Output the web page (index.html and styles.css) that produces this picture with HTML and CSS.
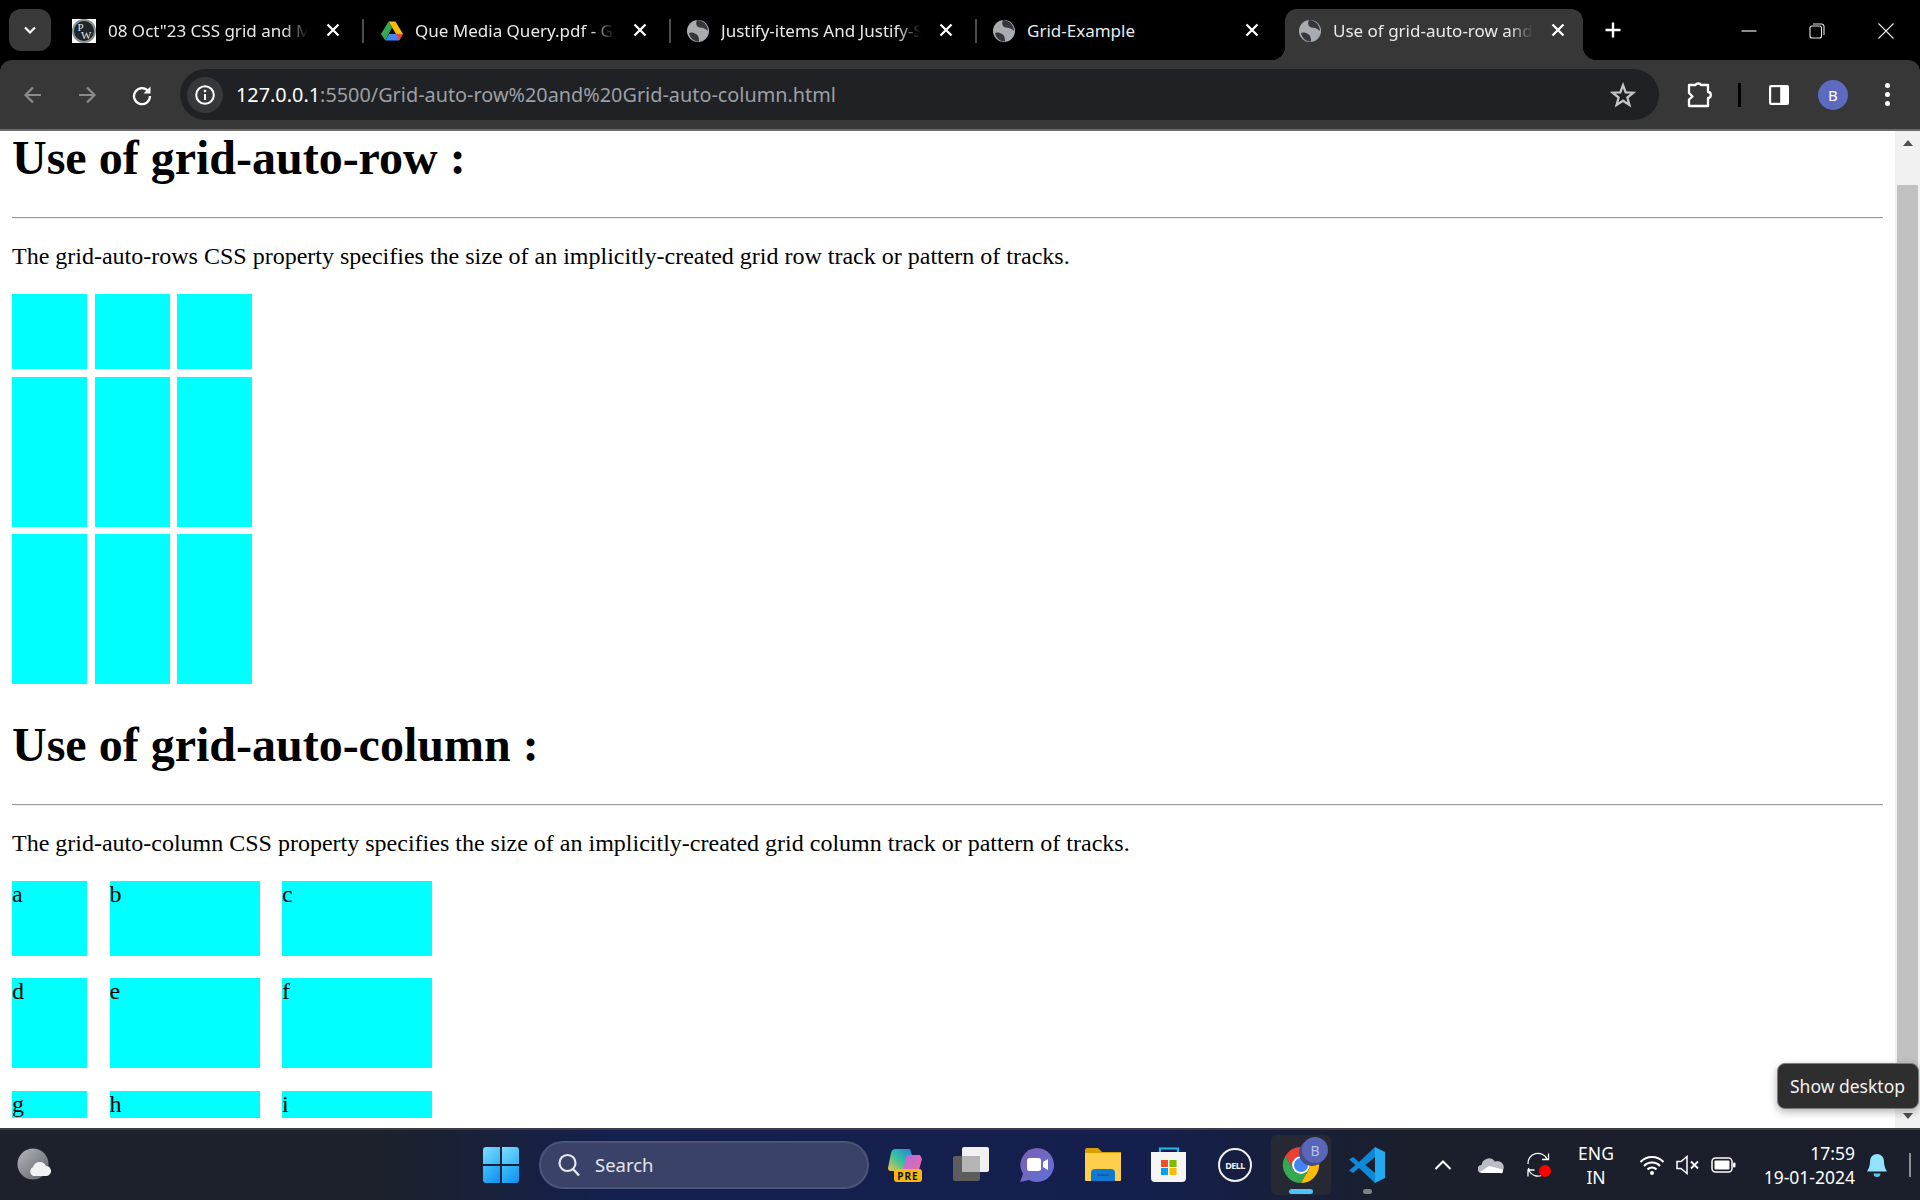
FILE: index.html
```html
<!DOCTYPE html>
<html lang="en">
<head>
<meta charset="utf-8">
<title>Use of grid-auto-row and Grid-auto-column</title>
<link rel="stylesheet" href="styles.css">
</head>
<body>
<div class="screen">
  <header class="chrome">
    <div class="tabstrip">
      <button class="tab-search"><svg width="16" height="16" viewBox="0 0 16 16"><path d="M3 5.500 8 10.500 13 5.500" fill="none" stroke="#fff" stroke-width="2.200"/></svg></button>
      <div class="tab">
        <svg class="fav fav-first" viewBox="0 0 24 24"><rect width="24" height="24" fill="#fff"/><circle cx="12" cy="12" r="12" fill="#8c9193"/><circle cx="12" cy="12" r="10" fill="#1d262a"/><text x="5.500" y="12" class="fav-p">P</text><text x="9" y="20" class="fav-p">W</text></svg>
        <span class="title fade">08 Oct"23 CSS grid and M</span>
        <svg class="close" viewBox="0 0 20 20"><path d="M4.500 4.500 15.500 15.500M15.500 4.500 4.500 15.500" stroke="#fff" stroke-width="2.300"/></svg>
        <i class="sep"></i>
      </div>
      <div class="tab">
        <svg class="fav" viewBox="0 0 24 24"><path d="M8.500 2.500h7L23 15h-7z" fill="#fbbc04"/><path d="M9 15h14l-4 6.500H5.300z" fill="#4285f4"/><path d="M16 15h7l-4 6.500z" fill="#ea4335"/><path d="M8.500 2.500 12 8.600 5.300 21.500 1 15z" fill="#34a853"/></svg>
        <span class="title fade">Que Media Query.pdf - G</span>
        <svg class="close" viewBox="0 0 20 20"><path d="M4.500 4.500 15.500 15.500M15.500 4.500 4.500 15.500" stroke="#fff" stroke-width="2.300"/></svg>
        <i class="sep"></i>
      </div>
      <div class="tab">
        <svg class="fav" viewBox="0 0 24 24"><use href="#globe"/></svg>
        <span class="title fade">Justify-items And Justify-S</span>
        <svg class="close" viewBox="0 0 20 20"><path d="M4.500 4.500 15.500 15.500M15.500 4.500 4.500 15.500" stroke="#fff" stroke-width="2.300"/></svg>
        <i class="sep"></i>
      </div>
      <div class="tab">
        <svg class="fav" viewBox="0 0 24 24"><use href="#globe"/></svg>
        <span class="title">Grid-Example</span>
        <svg class="close" viewBox="0 0 20 20"><path d="M4.500 4.500 15.500 15.500M15.500 4.500 4.500 15.500" stroke="#fff" stroke-width="2.300"/></svg>
      </div>
      <div class="tab tab-active">
        <svg class="fav" viewBox="0 0 24 24"><use href="#globe"/></svg>
        <span class="title fade">Use of grid-auto-row and</span>
        <svg class="close" viewBox="0 0 20 20"><path d="M4.500 4.500 15.500 15.500M15.500 4.500 4.500 15.500" stroke="#fff" stroke-width="2.300"/></svg>
      </div>
      <button class="new-tab"><svg width="18" height="18" viewBox="0 0 18 18"><path d="M9 1.500v15M1.500 9h15" stroke="#fff" stroke-width="2.400"/></svg></button>
      <div class="win-controls">
        <span class="win"><svg width="16" height="16" viewBox="0 0 16 16"><path d="M.5 8h15" stroke="#e8e8e8" stroke-width="1.200"/></svg></span>
        <span class="win"><svg width="16" height="16" viewBox="0 0 16 16"><rect x="1" y="3" width="11.500" height="12" rx="2" fill="none" stroke="#e8e8e8" stroke-width="1.100"/><path d="M4 1h8.500A2.500 2.500 0 0 1 15 3.500V12" fill="none" stroke="#e8e8e8" stroke-width="1.100"/></svg></span>
        <span class="win"><svg width="16" height="16" viewBox="0 0 16 16"><path d="M.5.500 15.500 15.500M15.500.500.5 15.500" stroke="#e8e8e8" stroke-width="1.100"/></svg></span>
      </div>
    </div>
    <div class="toolbar">
      <span class="tool tool-back"><svg width="22" height="22" viewBox="0 0 22 22"><path d="M19 11H4M11 3.500 3.500 11l7.500 7.500" fill="none" stroke="#8a8b8d" stroke-width="2.200"/></svg></span>
      <span class="tool tool-fwd"><svg width="22" height="22" viewBox="0 0 22 22"><path d="M3 11h15M11 3.500 18.500 11 11 18.500" fill="none" stroke="#8a8b8d" stroke-width="2.200"/></svg></span>
      <span class="tool tool-reload"><svg width="22" height="22" viewBox="0 0 22 22"><path d="M17.500 7.500A8 8 0 1 0 19 12" fill="none" stroke="#fff" stroke-width="2.300"/><path d="M19.500 2.500v7h-7z" fill="#fff"/></svg></span>
      <div class="omnibox">
        <span class="info"><svg width="22" height="22" viewBox="0 0 22 22"><circle cx="11" cy="11" r="8.800" fill="none" stroke="#fff" stroke-width="2"/><path d="M11 10v6" stroke="#fff" stroke-width="2"/><circle cx="11" cy="7" r="1.300" fill="#fff"/></svg></span>
        <span class="url"><b>127.0.0.1</b>:5500/Grid-auto-row%20and%20Grid-auto-column.html</span>
        <svg class="star" width="26" height="26" viewBox="0 0 26 26"><path d="M13 3.200 15.700 10.300 23.300 10.700 17.400 15.500 19.400 22.900 13 18.700 6.600 22.900 8.600 15.500 2.700 10.700 10.300 10.300z" fill="none" stroke="#c4c5c7" stroke-width="2.300"/></svg>
      </div>
      <span class="tool tool-ext"><svg width="26" height="26" viewBox="0 0 26 26"><path d="M3 3h6.500a3 2.500 0 0 1 5.500 0h7v7a2.800 3 0 0 1 0 6v8H3v-6.500l3.500-3L3 11z" fill="none" stroke="#fff" stroke-width="2.300" stroke-linejoin="round"/></svg></span>
      <i class="tool-sep"></i>
      <span class="tool tool-side"><svg width="22" height="22" viewBox="0 0 22 22"><rect x="1" y="1" width="20" height="20" rx="2" fill="#fff"/><rect x="3.200" y="3.200" width="9" height="15.600" fill="#373737"/></svg></span>
      <span class="avatar">B</span>
      <span class="tool tool-menu"><i></i><i></i><i></i></span>
    </div>
  </header>

  <div class="viewport">
    <main class="page">
      <h1 class="heading">Use of grid-auto-row :</h1>
      <hr class="rule">
      <p class="lead">The grid-auto-rows CSS property specifies the size of an implicitly-created grid row track or pattern of tracks.</p>
      <div class="grid-rows">
        <div class="cell"></div><div class="cell"></div><div class="cell"></div>
        <div class="cell"></div><div class="cell"></div><div class="cell"></div>
        <div class="cell"></div><div class="cell"></div><div class="cell"></div>
      </div>
      <h1 class="heading heading-two">Use of grid-auto-column :</h1>
      <hr class="rule">
      <p class="lead">The grid-auto-column CSS property specifies the size of an implicitly-created grid column track or pattern of tracks.</p>
      <div class="grid-cols">
        <div class="cell">a</div><div class="cell">b</div><div class="cell">c</div>
        <div class="cell">d</div><div class="cell">e</div><div class="cell">f</div>
        <div class="cell">g</div><div class="cell">h</div><div class="cell">i</div>
      </div>
    </main>
    <aside class="scrollbar">
      <i class="arrow-up"></i>
      <div class="thumb"></div>
      <i class="arrow-down"></i>
    </aside>
  </div>

  <footer class="taskbar">
    <span class="weather"><svg width="34" height="34" viewBox="0 0 34 34"><defs><linearGradient id="moon" x1="0" y1="0" x2="1" y2="1"><stop offset="0" stop-color="#b4b8bd"/><stop offset="1" stop-color="#5d6167"/></linearGradient></defs><circle cx="16" cy="16" r="15.500" fill="url(#moon)"/><path d="M16 28a5 5 0 0 1 0-9 7 7 0 0 1 13-1 5 5 0 0 1 3 9 3 3 0 0 1-3 1z" fill="#f1f1f1"/></svg></span>
    <span class="start"><svg width="36" height="36" viewBox="0 0 36 36"><defs><linearGradient id="wtop" x1="0" y1="0" x2="1" y2="1"><stop offset="0" stop-color="#7fdcff"/><stop offset="1" stop-color="#33b5f5"/></linearGradient><linearGradient id="wbot" x1="0" y1="0" x2="1" y2="1"><stop offset="0" stop-color="#3fc1f8"/><stop offset="1" stop-color="#0f8ff0"/></linearGradient></defs><path d="M3 0h14v17H0V3a3 3 0 0 1 3-3z" fill="url(#wtop)"/><path d="M19 0h14a3 3 0 0 1 3 3v14H19z" fill="url(#wtop)"/><path d="M0 19h17v17H3a3 3 0 0 1-3-3z" fill="url(#wbot)"/><path d="M19 19h17v14a3 3 0 0 1-3 3H19z" fill="url(#wbot)"/></svg></span>
    <div class="search">
      <svg width="24" height="24" viewBox="0 0 24 24"><circle cx="10.500" cy="10" r="8" fill="none" stroke="#e8e9ee" stroke-width="2.200"/><path d="M16 16l6 6.500" stroke="#e8e9ee" stroke-width="2.400"/></svg>
      <span class="search-label">Search</span>
    </div>
    <div class="apps">
      <span class="app"><svg width="36" height="36" viewBox="0 0 36 36"><defs><linearGradient id="cop1" x1="0" y1="1" x2="1" y2="0"><stop offset="0" stop-color="#f5c542"/><stop offset=".5" stop-color="#35c0a0"/><stop offset="1" stop-color="#2a7fe0"/></linearGradient><linearGradient id="cop2" x1="0" y1="0" x2="1" y2="1"><stop offset="0" stop-color="#b36be0"/><stop offset="1" stop-color="#ee6ca0"/></linearGradient></defs><path d="M9 2h14l2 6-8 16H4a3 3 0 0 1-3-3l3-15a5 5 0 0 1 5-4z" fill="url(#cop1)"/><path d="M20 8h13l2 4-3 11a4 4 0 0 1-4 3H15z" fill="url(#cop2)"/><rect x="7" y="22" width="28" height="13" rx="3" fill="#f7b90f"/><text x="21" y="32.500" class="pre">PRE</text></svg></span>
      <span class="app"><svg width="36" height="36" viewBox="0 0 36 36"><rect y="9" width="27" height="25" rx="2" fill="#5d5d5d"/><rect x="9" y="0" width="27" height="25" rx="2" fill="#f1f1f1"/><rect x="9" y="9" width="18" height="16" fill="#b5b5b5"/></svg></span>
      <span class="app"><svg width="36" height="36" viewBox="0 0 36 36"><defs><linearGradient id="meet" x1="0" y1="0" x2="1" y2="1"><stop offset="0" stop-color="#7d5fb0"/><stop offset="1" stop-color="#5f72d8"/></linearGradient></defs><path d="M18 1a17 17 0 1 1-8 32L1 35l3-8A17 17 0 0 1 18 1z" fill="url(#meet)"/><rect x="8" y="11" width="14" height="13" rx="2.500" fill="#fff"/><path d="M24 15l5-3v11l-5-3z" fill="#fff"/></svg></span>
      <span class="app"><svg width="36" height="36" viewBox="0 0 36 36"><path d="M0 3a2 2 0 0 1 2-2h11l4 4h19v8H0z" fill="#d9a000"/><path d="M0 6h36v27a1 1 0 0 1-1 1H1a1 1 0 0 1-1-1z" fill="#fdcf4d"/><path d="M6 34v-8a4 4 0 0 1 4-4h16a4 4 0 0 1 4 4v8z" fill="#1079d1"/><path d="M12 28h12" stroke="#0b5aa0" stroke-width="1.500"/></svg></span>
      <span class="app"><svg width="36" height="36" viewBox="0 0 36 36"><path d="M9 7V1.500h18V7" fill="none" stroke="#29b6f0" stroke-width="2.200"/><path d="M0 5h35v26a4 4 0 0 1-4 4H4a4 4 0 0 1-4-4z" fill="#f5f5f5"/><rect x="10" y="13" width="7" height="7" fill="#f25022"/><rect x="18.500" y="13" width="7" height="7" fill="#7fba00"/><rect x="10" y="21" width="7" height="7" fill="#00a4ef"/><rect x="18.500" y="21" width="7" height="7" fill="#ffb900"/></svg></span>
      <span class="app"><span class="dell">DELL</span></span>
      <span class="app">
        <span class="app-active">
          <svg width="38" height="38" viewBox="0 0 38 38"><path d="M34.600 10A18 18 0 0 0 3.400 10L11.200 23.500A9 9 0 0 1 19 10z" fill="#e94235"/><path d="M3.400 10A18 18 0 0 0 19 37L26.800 23.500A9 9 0 0 1 11.200 23.500z" fill="#34a853"/><path d="M19 37A18 18 0 0 0 34.600 10H19A9 9 0 0 1 26.800 23.500z" fill="#fbbc05"/><circle cx="19" cy="19" r="9" fill="#fff"/><circle cx="19" cy="19" r="7" fill="#4285f4"/></svg>
          <span class="app-badge">B</span>
          <i class="run run-on"></i>
        </span>
      </span>
      <span class="app"><svg width="36" height="36" viewBox="0 0 36 36"><path d="M26 0 10 15 4 10 0 12.500 6.500 18 0 23.500 4 26 10 21 26 36V26L16.500 18 26 10z" fill="#0f88d8"/><path d="M26 0 36 5V31L26 36z" fill="#23a9f2"/></svg><i class="run run-off"></i></span>
    </div>
    <div class="tray">
      <span class="tray-cell"><svg width="18" height="12" viewBox="0 0 18 12"><path d="M1.500 10 9 2.500 16.500 10" fill="none" stroke="#fff" stroke-width="2"/></svg></span>
      <span class="tray-cell"><svg width="26" height="18" viewBox="0 0 26 18"><path d="M4 17a4 4 0 0 1-.5-8A7.500 7.500 0 0 1 17 5.500 6 6 0 0 1 22 17z" fill="#b9bcc2"/><path d="M2 16l9-6 14 3.500V15a2 2 0 0 1-3 2H4z" fill="#fff"/></svg></span>
      <span class="tray-cell"><svg width="26" height="26" viewBox="0 0 26 26"><path d="M2 12A10 10 0 0 1 21 7M22.500 1.500V7.500H16M2.500 16l1 3.500a10 10 0 0 0 12 4M2 24.500V18h6.500" fill="none" stroke="#fff" stroke-width="1.300"/><circle cx="19" cy="19" r="6" fill="#f00"/></svg></span>
      <span class="lang">ENG<br>IN</span>
      <span class="tray-status">
        <svg width="26" height="20" viewBox="0 0 26 20"><path d="M1.500 7a16 16 0 0 1 23 0M5 11a11 11 0 0 1 16 0M8.500 14.500a6 6 0 0 1 9 0" fill="none" stroke="#fff" stroke-width="2"/><circle cx="13" cy="18" r="2" fill="#fff"/></svg>
        <svg width="24" height="20" viewBox="0 0 24 20"><path d="M1 6.500h4L11 1.500v17l-6-5H1z" fill="none" stroke="#fff" stroke-width="1.500"/><path d="M15 6.500l7 7M22 6.500l-7 7" stroke="#fff" stroke-width="1.800"/></svg>
        <svg width="25" height="16" viewBox="0 0 25 16"><rect x="1" y="1" width="20" height="14" rx="3.500" fill="none" stroke="#fff" stroke-width="1.500"/><rect x="3.500" y="3.500" width="15" height="9" rx="1" fill="#fff"/><rect x="22" y="5.500" width="2.500" height="5" rx="1" fill="#fff"/></svg>
      </span>
      <span class="clock">17:59<br>19-01-2024</span>
      <span class="bell"><svg width="22" height="24" viewBox="0 0 22 24"><path d="M11 1a7 7 0 0 1 7 7c0 5 1 7 3 10.500H1C3 15 4 13 4 8a7 7 0 0 1 7-7z" fill="#93e2fb"/><path d="M7.500 20.500h7a3.500 3.500 0 0 1-7 0z" fill="#5ec4ea"/></svg></span>
      <i class="show-line"></i>
    </div>
  </footer>

  <div class="tooltip">Show desktop</div>
</div>

<svg class="defs" width="0" height="0"><defs><g id="globe"><circle cx="12" cy="12" r="11" fill="#a8abaf"/><path d="M11 1C9.500 4 10 8 14 8.500c2.500.300 5 .500 8 3.500C22 6 17 1 11 1zM3 14c2-1 5-.500 7 1 2 1 3 3 3 7.500C8 23 4 19 3 14z" fill="#35363a"/></g></defs></svg>
</body>
</html>
```
FILE: styles.css
```css
* { box-sizing: border-box; }
html, body { margin: 0; padding: 0; height: 100%; overflow: hidden; background: #000; }
i { display: block; }
button { border: 0; padding: 0; background: none; }
svg { display: block; flex: none; }
.defs { position: absolute; }

.screen { position: relative; display: flex; flex-direction: column; width: 1920px; height: 1200px; }

/* browser chrome */
.chrome { flex: none; height: 131px; background: #000; font-family: "Noto Sans", "Open Sans", sans-serif; }
.tabstrip { display: flex; align-items: flex-start; height: 60px; padding-top: 9px; }
.tab-search { display: flex; align-items: center; justify-content: center; width: 42px; height: 42px; margin: 0 10px 0 9px; background: #3a3a3a; border-radius: 12px; }
.tab { position: relative; display: flex; align-items: center; flex: none; width: 306px; height: 51px; padding: 0 0 8px 13px; color: #e8eaed; font-size: 17px; }
.fav { width: 24px; height: 24px; }
.fav-first { margin: 0 1px 0 -2px; }
.title { flex: none; width: 216px; margin-left: 11px; white-space: nowrap; overflow: hidden; }
.fade { -webkit-mask-image: linear-gradient(to right, #000 176px, transparent 200px); mask-image: linear-gradient(to right, #000 176px, transparent 200px); }
.close { width: 20px; height: 20px; margin: -1px 0 0 -1px; }
.sep { width: 2px; height: 24px; margin-left: 19px; background: #4c4c4c; }
.tab-active { width: 298px; background: #373737; border-radius: 12px 12px 0 0; }
.tab-active::before, .tab-active::after { content: ""; position: absolute; bottom: 0; width: 14px; height: 14px; }
.tab-active::before { left: -14px; background: radial-gradient(circle at 0 0, transparent 14px, #373737 14.500px); }
.tab-active::after { right: -14px; background: radial-gradient(circle at 100% 0, transparent 14px, #373737 14.500px); }
.new-tab { display: flex; align-items: center; justify-content: center; width: 32px; height: 42px; margin-left: 14px; }
.win-controls { display: flex; margin-left: auto; margin-top: 2px; }
.win { display: flex; align-items: center; justify-content: center; width: 68px; height: 40px; }
.win:last-child { width: 69px; }

.toolbar { display: flex; align-items: center; height: 71px; background: #373737; border-bottom: 2px solid #6b6b6b; border-radius: 12px 12px 0 0; }
.tool { display: flex; align-items: center; justify-content: center; flex: none; }
.tool-back { width: 24px; margin-left: 21px; }
.tool-fwd { width: 24px; margin-left: 30px; }
.tool-reload { width: 24px; margin-left: 31px; }
.omnibox { display: flex; align-items: center; width: 1479px; height: 51px; margin-left: 26px; background: #202124; border-radius: 26px; }
.info { display: flex; align-items: center; justify-content: center; flex: none; width: 36px; height: 36px; margin-left: 7px; background: #37383b; border-radius: 50%; }
.url { margin-left: 13px; color: #9aa0a6; font-size: 19.850px; white-space: nowrap; }
.url b { font-weight: 400; color: #fff; }
.star { margin-left: auto; margin-right: 23px; }
.tool-ext { width: 26px; margin-left: 27px; }
.tool-sep { width: 3px; height: 24px; margin-left: 26px; background: #000; }
.tool-side { width: 22px; margin-left: 27px; }
.avatar { display: flex; align-items: center; justify-content: center; flex: none; width: 30px; height: 30px; margin-left: 28px; background: #5c6bc0; border-radius: 50%; color: #fff; font-size: 15px; }
.tool-menu { flex-direction: column; gap: 4px; width: 6px; margin-left: 36px; }
.tool-menu i { width: 5px; height: 5px; background: #fff; border-radius: 50%; }

/* page */
.viewport { display: flex; flex: none; height: 997px; background: #fff; overflow: hidden; }
.page { flex: none; width: 1895px; height: 997px; padding: 0 12px; overflow: hidden; background: #fff; color: #000; font-family: "Liberation Serif", "Times New Roman", serif; font-size: 24px; }
.heading { margin: -1px 0 0; font-size: 48px; line-height: 55px; font-weight: 700; }
.heading-two { margin-top: 33px; }
.rule { height: 2px; margin: 32px 0 0; border: 0; border-top: 1px solid #9a9a9a; border-bottom: 1px solid #eee; }
.lead { margin: 24px 0 0; line-height: 27px; }
.grid-rows { display: grid; grid-template-columns: repeat(3, 75px); grid-template-rows: 75px 150px 150px; gap: 7.500px; margin-top: 24px; }
.grid-cols { display: grid; grid-template-columns: 75px 150px 150px; grid-template-rows: 75px 90px 27px; gap: 22.500px; margin-top: 23.750px; }
.cell { background: #0ff; line-height: 27px; }

.scrollbar { display: flex; flex-direction: column; align-items: center; flex: none; width: 25px; height: 997px; background: #f1f1f1; }
.arrow-up { margin-top: 9px; border: 5.500px solid transparent; border-top: 0; border-bottom: 6px solid #505050; }
.thumb { width: 21px; height: 900px; margin-top: 39px; background: #c1c1c1; }
.arrow-down { margin-top: 28px; border: 5.500px solid transparent; border-bottom: 0; border-top: 6px solid #505050; }

/* taskbar */
.taskbar { display: flex; align-items: center; flex: none; height: 72px; border-top: 2px solid #3b3d42; background: linear-gradient(to right, #1c212b 0, #1c212b 380px, #14204f 620px, #141f4d 1150px, #1b1f2c 1400px, #1b1f2c 100%); color: #fff; font-family: "Noto Sans", "Open Sans", sans-serif; }
.weather { flex: none; margin-left: 17px; }
.start { flex: none; margin-left: 432px; }
.search { display: flex; align-items: center; flex: none; width: 330px; height: 48px; margin-left: 20px; padding: 0 0 1px 16px; background: #3a4268; border: 2px solid #4d5478; border-radius: 24px; }
.search-label { margin-left: 14px; font-size: 18.500px; color: #e3e4ea; }
.apps { display: flex; flex: none; margin-left: 3px; }
.app { position: relative; display: flex; align-items: center; justify-content: center; flex: none; width: 66px; height: 60px; }
.app-active { display: flex; align-items: center; justify-content: center; width: 60px; height: 60px; background: #262934; border-radius: 6px; }
.app-badge { position: absolute; top: 2px; left: 34px; display: flex; align-items: center; justify-content: center; width: 26px; height: 26px; background: #5a66b8; border-radius: 50%; box-shadow: -3px 3px 0 #474c8a; color: #b9c0ea; font-size: 14px; }
.run { position: absolute; height: 5px; bottom: 1px; border-radius: 3px; }
.run-on { left: 21px; width: 24px; background: #4fc3f7; }
.run-off { left: 29px; width: 9px; background: #7f8186; }
.dell { display: flex; align-items: center; justify-content: center; width: 34px; height: 34px; border: 2px solid #f2f2f2; border-radius: 50%; font-size: 9px; font-weight: 700; letter-spacing: -.5px; color: #f2f2f2; }
.tray { display: flex; align-items: center; flex: none; margin-left: 19px; height: 100%; }
.tray-cell { display: flex; align-items: center; justify-content: center; flex: none; width: 48px; }
.lang { flex: none; width: 66px; text-align: center; font-size: 17.500px; line-height: 24px; }
.tray-status { display: flex; align-items: center; flex: none; gap: 11px; width: 101px; margin-left: 10px; }
.clock { flex: none; width: 115px; text-align: right; font-size: 17.500px; line-height: 24px; }
.bell { flex: none; margin-left: 11px; }
.show-line { flex: none; width: 2px; height: 24px; margin-left: 21px; background: #8d8f94; }

.tooltip { position: absolute; top: 1063px; left: 1777px; width: 142px; height: 46px; padding-left: 12px; background: #2e2e2e; border: 1px solid #7a7a7a; border-radius: 8px; box-shadow: 0 3px 8px rgba(0,0,0,.3); color: #f2f2f2; font-family: "Noto Sans", "Open Sans", sans-serif; font-size: 17.500px; line-height: 44px; white-space: nowrap; }
.fav-p { font-family: "Liberation Serif", serif; font-size: 11px; fill: #e6e6e6; }
.pre { font-family: "Noto Sans", sans-serif; font-size: 10px; font-weight: 700; fill: #111; text-anchor: middle; letter-spacing: 1px; }
```
